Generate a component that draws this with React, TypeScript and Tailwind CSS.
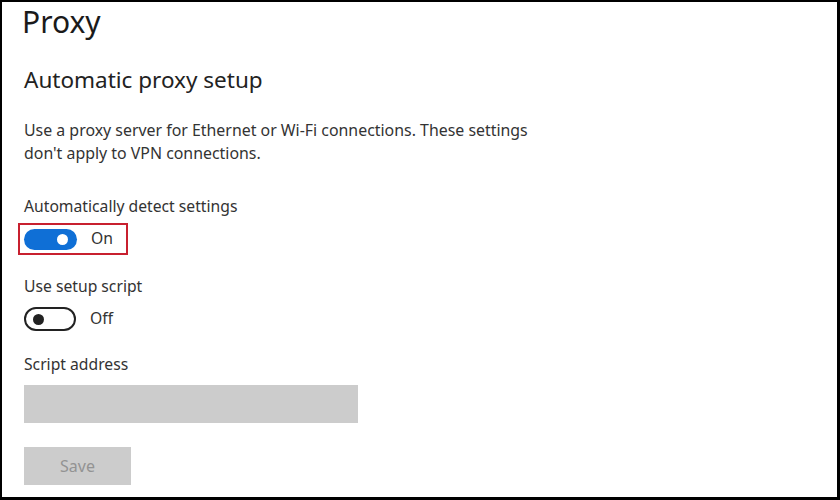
import { useState } from 'react'

function Toggle({ on, onChange }: { on: boolean; onChange: () => void }) {
  return (
    <button
      type="button"
      onClick={onChange}
      className={
        on
          ? 'flex items-center justify-end w-[53px] h-[21px] rounded-full bg-[#0f6fd6] pr-[9px]'
          : 'flex items-center justify-start w-[52px] h-[24px] rounded-full border-2 border-[#222] bg-white pl-[7px]'
      }
    >
      <span
        className={
          on
            ? 'block w-[11px] h-[11px] rounded-full bg-white'
            : 'block w-[11px] h-[11px] rounded-full bg-[#222]'
        }
      />
    </button>
  )
}

export default function App() {
  const [detect, setDetect] = useState(true)
  const [script, setScript] = useState(false)

  return (
    <div
      className="w-[840px] h-[500px] bg-white border-l-2 border-t-2 border-r-[3px] border-b-[3px] border-black text-[#2b2b2b] overflow-hidden"
      style={{ fontFamily: '"Noto Sans", "Open Sans", sans-serif' }}
    >
      <div className="pl-[20px]">
        <h1 className="text-[30px] leading-[40px] text-[#1a1a1a] font-normal">Proxy</h1>

        <h2 className="mt-[24px] pl-[2px] text-[22.5px] leading-[28px] font-normal text-[#222]">
          Automatic proxy setup
        </h2>

        <p className="mt-[25px] pl-[2px] w-[515px] text-[15.9px] leading-[23px] text-[#333]">
          Use a proxy server for Ethernet or Wi-Fi connections. These settings don't apply to VPN
          connections.
        </p>

        {/* Automatically detect */}
        <div className="mt-[31px] pl-[2px] text-[15.7px] leading-[20px] text-[#333]">
          Automatically detect settings
        </div>
        <div className="mt-[7px] ml-[-4px] w-[110px] h-[32px] border-2 border-[#c8202f] flex items-center pl-[4px] gap-[14px]">
          <Toggle on={detect} onChange={() => setDetect(!detect)} />
          <span className="text-[15.7px] text-[#333]">{detect ? 'On' : 'Off'}</span>
        </div>

        {/* Setup script */}
        <div className="mt-[21px] pl-[2px] text-[15.7px] leading-[20px] text-[#333]">
          Use setup script
        </div>
        <div className="mt-[11px] pl-[2px] flex items-center gap-[14px]">
          <Toggle on={script} onChange={() => setScript(!script)} />
          <span className="text-[15.7px] text-[#333]">{script ? 'On' : 'Off'}</span>
        </div>

        <div className="mt-[23px] pl-[2px] text-[15.7px] leading-[20px] text-[#333]">
          Script address
        </div>
        <div className="mt-[11px] ml-[2px] w-[334px] h-[38px] bg-[#cccccc]" />

        <button
          type="button"
          className="mt-[24px] ml-[2px] w-[107px] h-[38px] bg-[#cccccc] text-[16px] text-[#939393]"
        >
          Save
        </button>
      </div>
    </div>
  )
}
